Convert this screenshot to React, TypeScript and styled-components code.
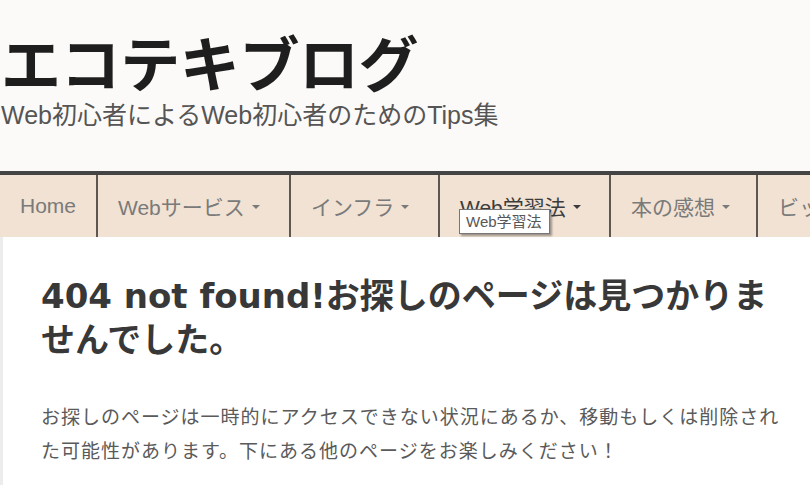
import React from 'react';
import styled, { createGlobalStyle } from 'styled-components';

const GlobalStyle = createGlobalStyle`
  html, body { margin: 0; padding: 0; background: #fcfaf8; overflow: hidden; }
  body { font-family: "Liberation Sans", "Noto Sans CJK JP", sans-serif; }
`;

const menu = [
  { label: 'Home', width: 98, drop: false },
  { label: 'Webサービス', width: 193, drop: true },
  { label: 'インフラ', width: 149, drop: true },
  { label: 'Web学習法', width: 171, drop: true, hover: true },
  { label: '本の感想', width: 147, drop: true },
  { label: 'ビッグデータ', width: 190, drop: true },
];

const App = () => {
  return (
    <Page>
      <GlobalStyle />
      <Header>
        <SiteTitle>エコテキブログ</SiteTitle>
        <Tagline>Web初心者によるWeb初心者のためのTips集</Tagline>
      </Header>

      <NavBar>
        {menu.map((m) => (
          <NavItem key={m.label} $w={m.width} $hover={!!m.hover}>
            {m.label}
            {m.drop && <Caret />}
            {m.hover && <Tooltip>Web学習法</Tooltip>}
          </NavItem>
        ))}
      </NavBar>

      <Content>
        <Title>404 not found!お探しのページは見つかりませんでした。</Title>
        <Message>
          お探しのページは一時的にアクセスできない状況にあるか、移動もしくは削除された可能性があります。下にある他のページをお楽しみください！
        </Message>
      </Content>
    </Page>
  );
};

const Page = styled.div`
  width: 1000px;
  height: 485px;
  overflow: hidden;
`;

const Header = styled.header`
  padding: 30px 0 0 1px;
  height: 171px;
  box-sizing: border-box;
`;

const SiteTitle = styled.h1`
  margin: 0;
  font-family: "Noto Sans CJK JP", sans-serif;
  font-weight: 700;
  font-size: 60px;
  line-height: 62px;
  color: #1e1e1e;
  letter-spacing: -0.4px;
`;

const Tagline = styled.p`
  margin: 8px 0 0;
  font-size: 25px;
  line-height: 30px;
  color: #555;
`;

const NavBar = styled.nav`
  display: flex;
  border-top: 4px solid #444;
  background: #f1e2d3;
  height: 62px;
`;

const NavItem = styled.div<{ $w: number; $hover: boolean }>`
  position: relative;
  flex: 0 0 ${(p) => p.$w}px;
  box-sizing: border-box;
  display: flex;
  align-items: center;
  padding-left: 20px;
  border-right: 2px solid #5e5650;
  font-size: 21px;
  white-space: nowrap;
  color: ${(p) => (p.$hover ? '#3c3c3c' : '#7a7a7a')};
`;

const Caret = styled.span`
  display: inline-block;
  margin-left: 7px;
  margin-top: 2px;
  border-top: 4px solid currentColor;
  border-left: 4px solid transparent;
  border-right: 4px solid transparent;
`;

const Tooltip = styled.span`
  position: absolute;
  left: 19px;
  top: 34px;
  padding: 2px 7px 2px 6px;
  background: #fff;
  border: 1px solid #767676;
  box-shadow: 2px 2px 2px rgba(0, 0, 0, 0.35);
  font-size: 15px;
  line-height: 19px;
  color: #575757;
`;

const Content = styled.main`
  background: #fff;
  border-left: 3px solid #ececec;
  padding: 37px 0 40px 38px;
  height: 100%;
`;

const Title = styled.h2`
  margin: 0;
  width: 745px;
  font-family: "DejaVu Sans", "Noto Sans CJK JP", sans-serif;
  font-weight: 700;
  font-size: 34px;
  line-height: 44px;
  color: #383838;
`;

const Message = styled.p`
  margin: 37px 0 0;
  width: 750px;
  font-family: "Noto Sans CJK JP", sans-serif;
  font-size: 19px;
  letter-spacing: 1px;
  line-height: 34px;
  color: #5a5a5a;
`;

export default App;
